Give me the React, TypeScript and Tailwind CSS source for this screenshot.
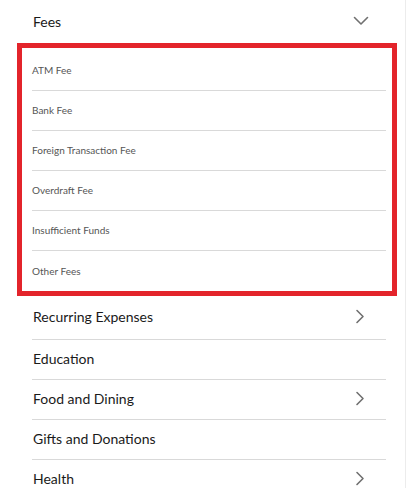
import React from 'react';

const fees = ['ATM Fee', 'Bank Fee', 'Foreign Transaction Fee', 'Overdraft Fee', 'Insufficient Funds', 'Other Fees'];

const categories = [
  { name: 'Recurring Expenses', more: true },
  { name: 'Education', more: false },
  { name: 'Food and Dining', more: true },
  { name: 'Gifts and Donations', more: false },
  { name: 'Health', more: true },
];

const ChevronDown = () => (
  <svg width="16" height="10" viewBox="0 0 16 10" fill="none" className="text-[#707070]">
    <path d="M1.5 1.5L8 8L14.5 1.5" stroke="currentColor" strokeWidth="1.6" strokeLinecap="round" strokeLinejoin="round" />
  </svg>
);

const ChevronRight = () => (
  <svg width="10" height="15" viewBox="0 0 10 15" fill="none" className="text-[#707070]">
    <path d="M2 1.5L8 7.5L2 13.5" stroke="currentColor" strokeWidth="1.6" strokeLinecap="round" strokeLinejoin="round" />
  </svg>
);

export default function App() {
  return (
    <div className="h-[488px] w-[407px] overflow-hidden bg-white" style={{ fontFamily: 'Lato, "Open Sans", sans-serif' }}>
      <div className="h-full w-[406px] border-r border-[#ececec]">
        <div className="flex h-[43px] items-center justify-between pl-[33px] pr-[36px] pb-[1px]">
          <span className="text-[14px] text-[#1a1a1a]">Fees</span>
          <ChevronDown />
        </div>

        <div className="ml-[17px] mr-[8px] border-[5px] border-[#e3242b] pt-[3px]">
          {fees.map((f, i) => (
            <div
              key={f}
              className={`ml-[10px] mr-[6px] flex h-[40px] items-center ${i < fees.length - 1 ? 'border-b border-[#d9d9d9]' : ''}`}
            >
              <span className="text-[10px] text-[#555]">{f}</span>
            </div>
          ))}
        </div>

        <div className="ml-[32px] mr-[19px]">
          {categories.map((c, i) => (
            <div
              key={c.name}
              className={`flex items-center justify-between pr-[21px] pb-[3px] ${i === 0 ? 'h-[44px]' : 'h-[40px]'} ${i < categories.length - 1 ? 'border-b border-[#d9d9d9]' : ''}`}
            >
              <span className="pl-[1px] text-[14px] text-[#1a1a1a]">{c.name}</span>
              {c.more && <ChevronRight />}
            </div>
          ))}
        </div>
      </div>
    </div>
  );
}
